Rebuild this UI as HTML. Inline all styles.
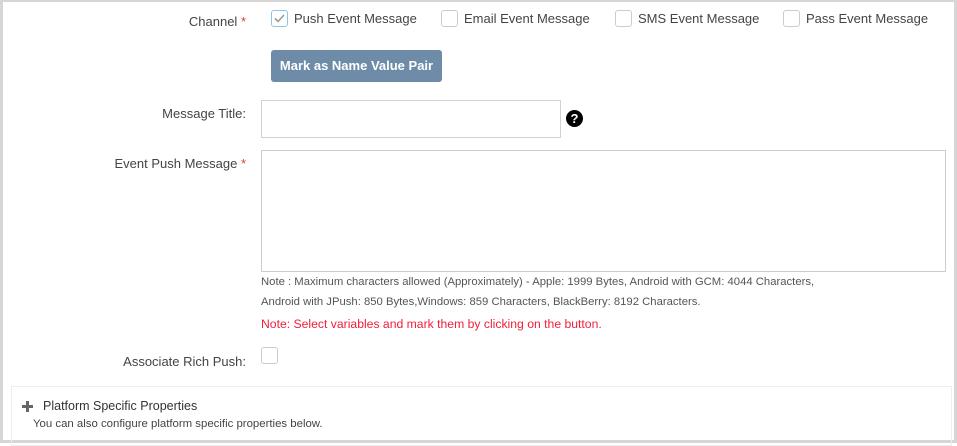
<!DOCTYPE html>
<html><head><meta charset="utf-8"><style>
*{box-sizing:border-box;margin:0;padding:0}
body{width:957px;height:443px;background:#fff;font-family:"Liberation Sans",sans-serif;color:#333;position:relative;overflow:hidden}
.frame{position:absolute;left:0;top:0;width:957px;height:443px;border:3px solid #d6d6d6;border-top-width:2px}
.a{position:absolute;white-space:nowrap}
.lbl{font-size:13px;color:#444;text-align:right;right:711px}
.req{color:#e53935}
.cb{position:absolute;width:17px;height:17px;border:1px solid #ccc;border-radius:3px;background:#fff}
.cbt{font-size:13px;color:#444}
.note{font-size:11.3px;color:#555}
</style></head><body>
<div class="frame"></div>
<div class="a lbl" style="top:14px">Channel <span class="req">*</span></div>
<div class="cb" style="left:271px;top:10px;border-color:#8ec5e8"><svg width="15" height="15" viewBox="0 0 15 15" style="position:absolute;left:0;top:0"><path d="M3 7.5 L6 10.5 L12 4" fill="none" stroke="#999" stroke-width="1.6"/></svg></div>
<div class="a cbt" style="left:294px;top:11px">Push Event Message</div>
<div class="cb" style="left:441px;top:10px"></div>
<div class="a cbt" style="left:464px;top:11px">Email Event Message</div>
<div class="cb" style="left:615px;top:10px"></div>
<div class="a cbt" style="left:638px;top:11px">SMS Event Message</div>
<div class="cb" style="left:783px;top:10px"></div>
<div class="a cbt" style="left:806px;top:11px">Pass Event Message</div>
<div class="a" style="left:271px;top:50px;width:171px;height:32px;background:#6e8ca8;border-radius:3px;color:#fff;font-size:13px;font-weight:bold;text-align:center;line-height:32px">Mark as Name Value Pair</div>
<div class="a lbl" style="top:106px">Message Title:</div>
<div class="a" style="left:261px;top:100px;width:300px;height:38px;border:1px solid #ccd3db"></div>
<div class="a" style="left:566px;top:110px;width:17px;height:17px;border-radius:50%;background:#000;color:#fff;font-size:13px;font-weight:bold;text-align:center;line-height:17px">?</div>
<div class="a lbl" style="top:156px">Event Push Message <span class="req">*</span></div>
<div class="a" style="left:261px;top:150px;width:685px;height:122px;border:1px solid #ccc"></div>
<div class="a note" style="left:261px;top:276px">Note : Maximum characters allowed (Approximately) - Apple: 1999 Bytes, Android with GCM: 4044 Characters,</div>
<div class="a note" style="left:261px;top:296px">Android with JPush: 850 Bytes,Windows: 859 Characters, BlackBerry: 8192 Characters.</div>
<div class="a note" style="left:261px;top:317px;color:#f0203c;font-size:12.2px">Note: Select variables and mark them by clicking on the button.</div>
<div class="a lbl" style="top:354px">Associate Rich Push:</div>
<div class="cb" style="left:261px;top:347px"></div>
<div class="a" style="left:11px;top:386px;width:941px;height:60px;border:1px solid #eee"></div>
<div class="a" style="left:22px;top:405px;width:11px;height:3px;background:#666"></div>
<div class="a" style="left:26px;top:401px;width:3px;height:11px;background:#666"></div>
<div class="a" style="left:43px;top:399px;font-size:12.5px;color:#333">Platform Specific Properties</div>
<div class="a" style="left:33px;top:418px;font-size:11.4px;color:#444">You can also configure platform specific properties below.</div>
</body></html>
